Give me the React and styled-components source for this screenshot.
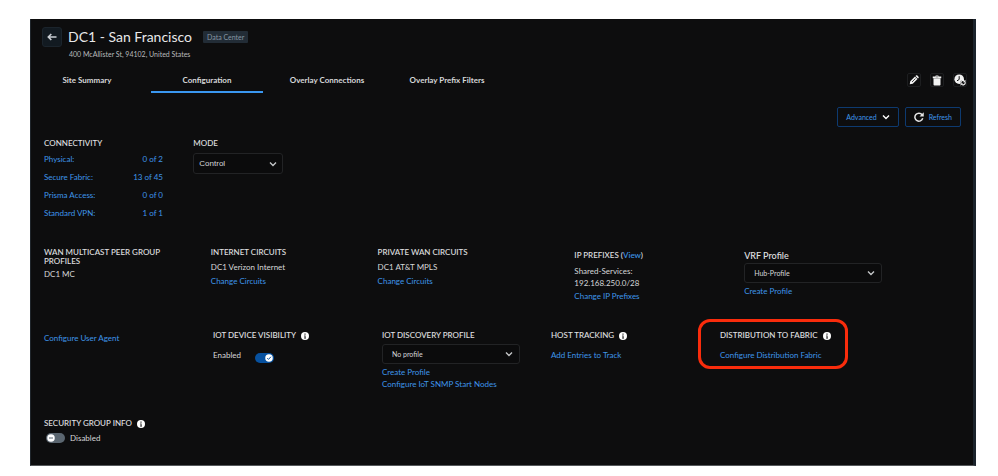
import React, { useState } from "react";
import styled, { createGlobalStyle, css } from "styled-components";

const GlobalStyle = createGlobalStyle`
  *{
    box-sizing: border-box;
  }
  body{
    margin: 0;
    background: #ffffff;
    color: #d6d7d9;
    font: 400 8px/12px Lato, "Open Sans", sans-serif;
  }
  button, select, input{
    font-family: inherit;
    margin: 0;
  }
  a{
    color: #3f96ea;
    text-decoration: none;
  }
  svg{
    display: block;
    flex: none;
  }
`;
const Page = styled.main`
  margin: 19px 22px 10px 30px;
  padding: 8px 0 21px;
  background: #0d0d0e;
  border-left: 1px solid #20262c;
  border-right: 3px solid #1b232c;
  border-bottom: 1px solid #55585b;
`;
const Header = styled.header`
  display: flex;
  align-items: flex-start;
  padding: 0 12px 0 11px;
`;
const BackButton = styled.button`
  width: 20px;
  height: 20px;
  padding: 0;
  display: flex;
  justify-content: center;
  align-items: center;
  background: #121a21;
  border: 1px solid #1b242c;
  border-radius: 3px;
`;
const Heading = styled.div`
  margin-left: 6px;
`;
const TitleLine = styled.div`
  display: flex;
  align-items: center;
  gap: 11px;
`;
const Title = styled.h1`
  margin: 0;
  font-size: 14px;
  font-weight: 400;
  line-height: 20px;
  color: #e8e8e9;
`;
const Badge = styled.span`
  padding: 0 4px;
  font-size: 7px;
  line-height: 12px;
  color: #8796a3;
  background: #222c36;
  border-radius: 1px;
`;
const Address = styled.p`
  margin: 2px 0 0 1px;
  font-size: 7px;
  line-height: 10px;
  color: #b9babc;
`;
const TabBar = styled.div`
  display: flex;
  justify-content: space-between;
  align-items: center;
  margin-top: 8px;
  padding-right: 6px;
`;
const Tabs = styled.nav`
  display: flex;
  gap: 8px;
`;
const Tab = styled.a`
  width: 112px;
  height: 26px;
  padding-top: 7px;
  color: #d6d7d9;
  font-size: 8px;
  font-weight: 700;
  text-align: center;
  border-bottom: 2px solid ${({ $active }) => $active ? "#3a97f0" : "transparent"};
`;
const IconButtons = styled.div`
  display: flex;
  gap: 9px;
`;
const IconButton = styled.button`
  width: 14px;
  height: 14px;
  padding: 0;
  display: flex;
  justify-content: center;
  align-items: center;
  background: transparent;
  border: 1px solid #1d1e20;
  border-radius: 2px;
`;
const Toolbar = styled.div`
  display: flex;
  justify-content: flex-end;
  gap: 6px;
  margin-top: 14px;
  padding-right: 12px;
`;
const ToolButton = styled.button`
  height: 20px;
  padding: 0 8px;
  display: flex;
  align-items: center;
  gap: 5px;
  font-size: 7px;
  color: #3f96ea;
  background: transparent;
  border: 1px solid #0d3a70;
  border-radius: 2px;
`;
const Row = styled.section`
  display: grid;
  grid-template-columns: ${({ $columns }) => $columns};
  margin-top: ${({ $top }) => $top}px;
  padding: 0 84px 0 13px;
`;
const Cell = styled.div`
  position: relative;
  padding-top: ${({ $lowered }) => $lowered ? "3px" : "0"};
`;
const Label = styled.h2`
  margin: 0 0 ${({ $space = 3 }) => $space}px;
  display: flex;
  align-items: center;
  gap: 5px;
  font-size: 8px;
  font-weight: 500;
  line-height: 9px;
  color: #e0e1e3;
`;
const ProfileLabel = styled(Label)`
  font-size: 9px;
`;
const Line = styled.p`
  margin: 0;
  line-height: ${({ $height = 14 }) => $height}px;
`;
const Stats = styled.dl`
  width: 119px;
  margin: 0;
  display: grid;
  grid-template-columns: 1fr auto;
  line-height: 18px;
  color: #3f96ea;
  dd{
    margin: 0;
    text-align: right;
  }
`;
const SelectWrap = styled.div`
  position: relative;
  width: ${({ $small }) => $small ? "90px" : "138px"};
  margin-bottom: 2px;
  svg{
    position: absolute;
    right: ${({ $small }) => $small ? "6px" : "7px"};
    top: 50%;
    margin-top: -4px;
    pointer-events: none;
  }
`;
const Select = styled.select`
  display: block;
  width: 100%;
  height: ${({ $small }) => $small ? "21px" : "20px"};
  padding: 0 18px 0 ${({ $small }) => $small ? "5px" : "9px"};
  appearance: none;
  font-size: 7px;
  ${({ $small }) => $small && css`
    font-family: "Liberation Sans", Arial, sans-serif;
    font-size: 8px;
  `}
  color: #d6d7d9;
  background: #0b0b0c;
  border: 1px solid #222325;
  border-radius: 3px;
`;
const Toggle = styled.label`
  display: flex;
  align-items: center;
  gap: ${({ $gap }) => $gap}px;
  padding-left: ${({ $indent = 0 }) => $indent}px;
`;
const Track = styled.span`
  position: relative;
  width: 19px;
  height: 10px;
  padding: 1px;
  display: flex;
  justify-content: ${({ $on }) => $on ? "flex-end" : "flex-start"};
  align-items: center;
  background: ${({ $on }) => $on ? "#07519f" : "#5b6670"};
  border-radius: 5px;
  input{
    position: absolute;
    inset: 0;
    width: 100%;
    height: 100%;
    opacity: 0;
  }
`;
const VisibilityToggle = styled(Toggle)`
  align-items: flex-start;
  ${Track}{
    margin-top: 4px;
  }
`;
const Highlight = styled.span`
  position: absolute;
  top: -12px;
  left: -22px;
  width: 150px;
  height: 50px;
  border: 3px solid #f92c0c;
  border-radius: 12px;
  pointer-events: none;
`;

function Chevron({ color = "#c4c6c8" }){
  return(
    <svg width="8" height="8" viewBox="0 0 8 8" fill="none" stroke={color} strokeWidth="1.4">
      <path d="M1 2.5 4 5.5 7 2.5"/>
    </svg>
  );
}

function InfoIcon(){
  return(
    <svg width="8" height="8" viewBox="0 0 16 16">
      <circle cx="8" cy="8" r="8" fill="#ffffff"/>
      <path d="M6.4 7h2.6v4.5h1v1.3H6.2v-1.3h1V8.3h-.8zM7 3.2h2v2.2H7z" fill="#0d0d0e"/>
    </svg>
  );
}

function BackIcon(){
  return(
    <svg width="10" height="8" viewBox="0 0 10 8" fill="none" stroke="#c9ced3" strokeWidth="1.6">
      <path d="M9.500 4H1.3M4.3 1 1.3 4l3 3"/>
    </svg>
  );
}

function PencilIcon(){
  return(
    <svg width="10" height="10" viewBox="0 0 20 20">
      <path d="M1.500 18.500l1-6L12 3l5 5-9.500 9.500zM13 2l1-1c.8-.8 1.900-.8 2.700 0L19 3.300c.8.8.8 1.900 0 2.700l-1 1z" fill="#f2f2f2"/>
      <path d="M6 14l7-7" stroke="#0d0d0e" strokeWidth="1.500"/>
    </svg>
  );
}

function TrashIcon(){
  return(
    <svg width="10" height="11" viewBox="0 0 20 22" fill="#f2f2f2">
      <path d="M1.500 3h5l1-2h5l1 2h5v3.500h-17zM3 7h14v12c0 1.200-.7 2-2 2H5c-1.300 0-2-.8-2-2z"/>
      <path d="M7.500 3.800h5" stroke="#0d0d0e" strokeWidth="1"/>
    </svg>
  );
}

function ClockIcon(){
  return(
    <svg width="12" height="12" viewBox="0 0 22 22">
      <circle cx="9.500" cy="9.500" r="8.800" fill="#f2f2f2"/>
      <path d="M9.500 4v6L5.500 12.500" fill="none" stroke="#0d0d0e" strokeWidth="1.800"/>
      <circle cx="16.500" cy="16" r="5" fill="#0d0d0e"/>
      <path d="M12.800 17a3.800 3.800 0 0 1 6.200-4M20.200 15a3.800 3.800 0 0 1-6.200 4" fill="none" stroke="#f2f2f2" strokeWidth="2.200"/>
      <path d="M21 10.500v4.500h-4.500zM12 21.500v-4.500h4.500z" fill="#f2f2f2"/>
    </svg>
  );
}

function RefreshIcon(){
  return(
    <svg width="10" height="10" viewBox="0 0 20 20">
      <path d="M16.200 5.500A8 8 0 1 0 17.500 12.500" fill="none" stroke="#e6e6e6" strokeWidth="3"/>
      <path d="M19.500 .5v8.500h-8.500z" fill="#e6e6e6"/>
    </svg>
  );
}

function Knob({ on }){
  return(
    <svg width="8" height="8" viewBox="0 0 16 16" fill="none">
      <circle cx="8" cy="8" r="7.500" fill="#ffffff"/>
      <path d={on ? "M4.500 8.300 7 10.800 11.800 5.500" : "M4 8h8"} stroke={on ? "#07519f" : "#5b6670"} strokeWidth="2"/>
    </svg>
  );
}

function Switch({ on, onChange }){
  return(
    <Track $on={on}>
      <Knob on={on}/>
      <input type="checkbox" role="switch" checked={on} onChange={e => onChange(e.target.checked)}/>
    </Track>
  );
}

function Dropdown({ label, options, small }){
  return(
    <SelectWrap $small={small}>
      <Select $small={small} aria-label={label}>
        {options.map(option => <option key={option}>{option}</option>)}
      </Select>
      <Chevron/>
    </SelectWrap>
  );
}

const tabs = ["Site Summary", "Configuration", "Overlay Connections", "Overlay Prefix Filters"];
const stats = [
  ["Physical:", "0 of 2"],
  ["Secure Fabric:", "13 of 45"],
  ["Prisma Access:", "0 of 0"],
  ["Standard VPN:", "1 of 1"],
];

function App(){
  const [activeTab, setActiveTab] = useState("Configuration");
  const [iotVisible, setIotVisible] = useState(true);
  const [groupInfo, setGroupInfo] = useState(false);

  return(
    <>
      <GlobalStyle/>
      <Page>
        <Header>
          <BackButton type="button" aria-label="Back"><BackIcon/></BackButton>
          <Heading>
            <TitleLine>
              <Title>DC1 - San Francisco</Title>
              <Badge>Data Center</Badge>
            </TitleLine>
            <Address>400 McAllister St, 94102, United States</Address>
          </Heading>
        </Header>
        <TabBar>
          <Tabs>
            {tabs.map(tab => (
              <Tab key={tab} href="#" $active={tab === activeTab} onClick={() => setActiveTab(tab)}>{tab}</Tab>
            ))}
          </Tabs>
          <IconButtons>
            <IconButton type="button" aria-label="Edit"><PencilIcon/></IconButton>
            <IconButton type="button" aria-label="Delete"><TrashIcon/></IconButton>
            <IconButton type="button" aria-label="History"><ClockIcon/></IconButton>
          </IconButtons>
        </TabBar>
        <Toolbar>
          <ToolButton type="button">Advanced <Chevron color="#ffffff"/></ToolButton>
          <ToolButton type="button"><RefreshIcon/> Refresh</ToolButton>
        </Toolbar>
        <Row $columns="149fr 694fr" $top={12}>
          <Cell>
            <Label $space={2}>CONNECTIVITY</Label>
            <Stats>
              {stats.map(([name, value]) => (
                <React.Fragment key={name}>
                  <dt>{name}</dt>
                  <dd>{value}</dd>
                </React.Fragment>
              ))}
            </Stats>
          </Cell>
          <Cell>
            <Label $space={5}>MODE</Label>
            <Dropdown small label="Mode" options={["Control", "Disabled", "Analytics"]}/>
          </Cell>
        </Row>
        <Row $columns="167fr 167fr 197fr 170fr 145fr" $top={26}>
          <Cell>
            <Label $space={1}>WAN MULTICAST PEER GROUP<br/>PROFILES</Label>
            <Line>DC1 MC</Line>
          </Cell>
          <Cell>
            <Label>INTERNET CIRCUITS</Label>
            <Line>DC1 Verizon Internet</Line>
            <Line><a href="#">Change Circuits</a></Line>
          </Cell>
          <Cell>
            <Label>PRIVATE WAN CIRCUITS</Label>
            <Line>DC1 AT&amp;T MPLS</Line>
            <Line><a href="#">Change Circuits</a></Line>
          </Cell>
          <Cell $lowered>
            <Label $space={5}><span>IP PREFIXES (<a href="#">View</a>)</span></Label>
            <Line $height={12}>Shared-Services:</Line>
            <Line $height={12}>192.168.250.0/28</Line>
            <Line><a href="#">Change IP Prefixes</a></Line>
          </Cell>
          <Cell $lowered>
            <ProfileLabel>VRF Profile</ProfileLabel>
            <Dropdown label="VRF Profile" options={["Hub-Profile"]}/>
            <Line $height={12}><a href="#">Create Profile</a></Line>
          </Cell>
        </Row>
        <Row $columns="repeat(5, 1fr)" $top={28}>
          <Cell>
            <Line><a href="#">Configure User Agent</a></Line>
          </Cell>
          <Cell>
            <Label $space={9}>IOT DEVICE VISIBILITY <InfoIcon/></Label>
            <VisibilityToggle $gap={14}>
              Enabled
              <Switch on={iotVisible} onChange={setIotVisible}/>
            </VisibilityToggle>
          </Cell>
          <Cell>
            <Label $space={4}>IOT DISCOVERY PROFILE</Label>
            <Dropdown label="IoT discovery profile" options={["No profile"]}/>
            <Line $height={12}><a href="#">Create Profile</a></Line>
            <Line $height={12}><a href="#">Configure IoT SNMP Start Nodes</a></Line>
          </Cell>
          <Cell>
            <Label $space={9}>HOST TRACKING <InfoIcon/></Label>
            <Line $height={12}><a href="#">Add Entries to Track</a></Line>
          </Cell>
          <Cell>
            <Highlight/>
            <Label $space={9}>DISTRIBUTION TO FABRIC <InfoIcon/></Label>
            <Line $height={12}><a href="#">Configure Distribution Fabric</a></Line>
          </Cell>
        </Row>
        <Row $columns="1fr" $top={29}>
          <Cell>
            <Label $space={4}>SECURITY GROUP INFO <InfoIcon/></Label>
            <Toggle $gap={5} $indent={2}>
              <Switch on={groupInfo} onChange={setGroupInfo}/>
              Disabled
            </Toggle>
          </Cell>
        </Row>
      </Page>
    </>
  );
}

export default App;
